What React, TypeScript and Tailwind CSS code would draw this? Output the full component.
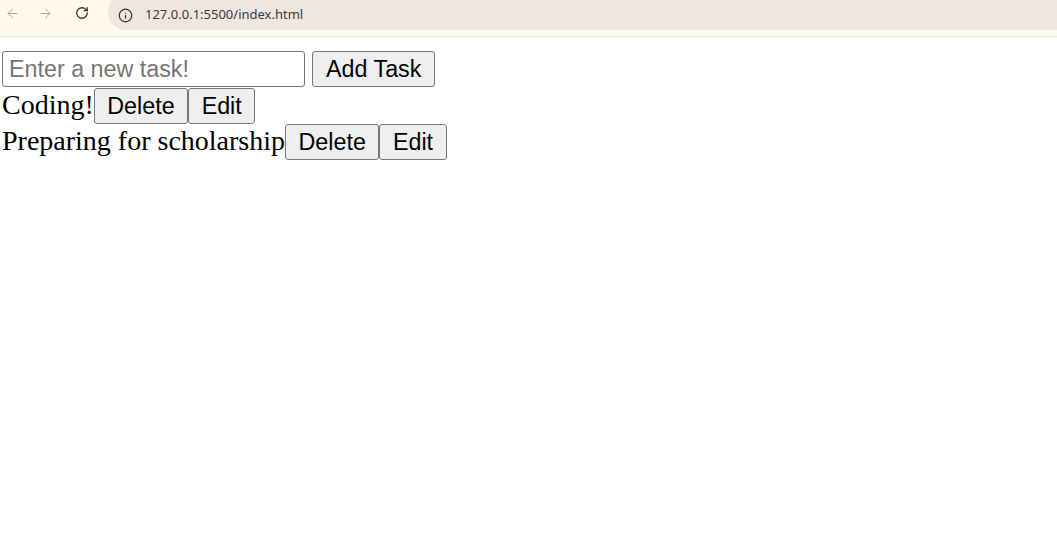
import { ArrowLeft, ArrowRight, RotateCw, Info } from 'lucide-react';

const tasks = ['Coding!', 'Preparing for scholarship'];

const btn =
  "h-[36px] border border-[#767676] rounded-[3px] bg-[#efefef] text-black text-[23.3px] leading-none font-['Liberation_Sans',Arial,sans-serif]";

function BrowserBar() {
  return (
    <div className="h-[37px] bg-[#fff8eb] border-b border-[#e6ded5] flex overflow-hidden">
      <div className="flex items-start pt-[6px]">
        <div className="w-[24px] flex justify-center text-[#a8a49f]">
          <ArrowLeft size={15} strokeWidth={1.6} />
        </div>
        <div className="w-[24px] ml-[9px] flex justify-center text-[#a8a49f]">
          <ArrowRight size={15} strokeWidth={1.6} />
        </div>
        <div className="w-[24px] ml-[13px] flex justify-center text-[#333]">
          <RotateCw size={14} strokeWidth={2.2} />
        </div>
      </div>
      <div className="ml-[14px] -mt-[6px] h-[36px] flex-1 bg-[#efe6e0] rounded-l-[18px] flex items-center pt-[6px] pl-[10px]">
        <Info size={15} strokeWidth={2} className="text-[#333]" />
        <span className="ml-[12px] text-[13px] text-[#3a3a3a] font-['Noto_Sans',Roboto,sans-serif]">
          127.0.0.1:5500/index.html
        </span>
      </div>
    </div>
  );
}

export default function App() {
  return (
    <div className="min-h-[559px] bg-white">
      <BrowserBar />
      <div className="pt-[14px] pl-[2px] font-['Liberation_Serif','Times_New_Roman',serif] text-[28px] text-black">
        <div className="flex items-baseline">
          <input
            type="text"
            placeholder="Enter a new task!"
            className="w-[303px] h-[36px] px-[6px] border border-[#767676] rounded-[3px] text-[23.3px] font-['Liberation_Sans',Arial,sans-serif] placeholder:text-[#757575] outline-none"
          />
          <button className={`${btn} ml-[7px] px-[13px]`}>Add Task</button>
        </div>
        {tasks.map((t, i) => (
          <div key={i} className={`flex items-baseline ${i === 0 ? 'mt-[1px]' : ''}`}>
            <span className="leading-none">{t}</span>
            <button className={`${btn} px-[12.5px]`}>Delete</button>
            <button className={`${btn} px-[12.5px]`}>Edit</button>
          </div>
        ))}
      </div>
    </div>
  );
}
